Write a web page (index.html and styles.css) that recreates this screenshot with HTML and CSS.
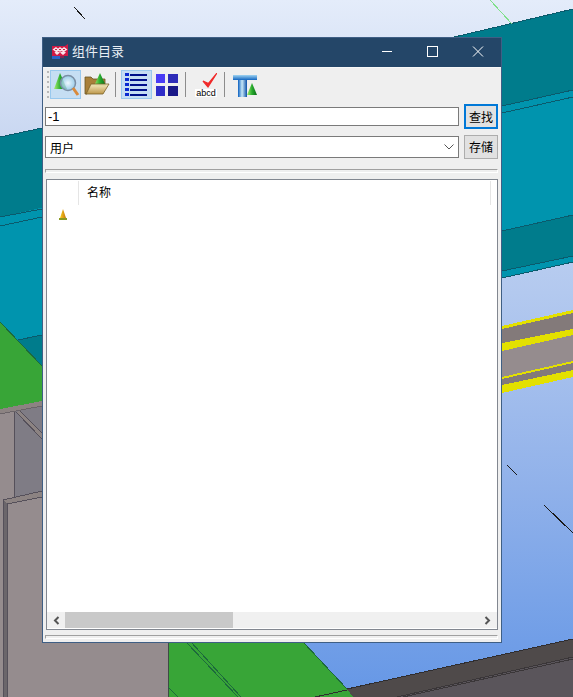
FILE: index.html
```html
<!DOCTYPE html>
<html lang="zh">
<head>
<meta charset="utf-8">
<title>组件目录</title>
<link rel="stylesheet" href="styles.css">
</head>
<body>
<svg class="scene" width="573" height="697" viewBox="0 0 573 697" shape-rendering="crispEdges">
  <defs>
    <linearGradient id="sky" x1="0" y1="0" x2="0" y2="1">
      <stop offset="0" stop-color="#e4ecfa"/>
      <stop offset="0.2" stop-color="#c9d7f1"/>
      <stop offset="0.42" stop-color="#b3c9ef"/>
      <stop offset="0.7" stop-color="#90b1ea"/>
      <stop offset="1" stop-color="#6597e6"/>
    </linearGradient>
  </defs>
  <rect width="573" height="697" fill="url(#sky)"/>
  <polygon points="0,137 42,128 500,128 500,37 450,38 573,9 573,256 0,380" fill="#007c8c"/>
  <polygon points="0,217 573,90 573,262 502,278 0,380" fill="#0094ae"/>
  <polygon points="0,137 42,128 500,128 450,38 573,9 573,90 0,217" fill="#007c8c"/>
  <polygon points="502,231 573,215 573,256 502,271" fill="#007c8c"/>
  <polyline points="450,38 573,9" fill="none" stroke="#0b5a6c"/>
  <polyline points="0,137 42,128" fill="none" stroke="#0b5a6c"/>
  <polyline points="0,217 42,209" fill="none" stroke="#0b5a6c"/>
  <polyline points="0,226 42,217" fill="none" stroke="#0b5a6c"/>
  <polyline points="502,106 573,90" fill="none" stroke="#0b5a6c"/>
  <polyline points="502,113 573,97" fill="none" stroke="#0b5a6c"/>
  <polyline points="502,231 573,215" fill="none" stroke="#0b5a6c"/>
  <polyline points="502,271 573,256" fill="none" stroke="#0b5a6c"/>
  <polyline points="502,278 573,262" fill="none" stroke="#0b5a6c"/>
  <rect x="0" y="260" width="42" height="70" fill="#0094ae"/>
  <polyline points="490,0 512,24" fill="none" stroke="#7fe08a"/>
  <polyline points="74,7 85,19" fill="none" stroke="#1a1a1a"/>
  <polyline points="507,465 517,475" fill="none" stroke="#1a1a1a"/>
  <polyline points="544,505 573,533" fill="none" stroke="#1a1a1a"/>

  <polygon points="502,326 573,310 573,377 502,393" fill="#e3e000"/>
  <polygon points="502,329 573,313 573,329 502,343" fill="#837a7a"/>
  <polygon points="502,351 573,335 573,361 502,377" fill="#958c8e"/>
  <polygon points="502,379 573,363 573,370 502,385" fill="#837a7a"/>

  <polygon points="0,322 42,366 42,401 0,409" fill="#38a537"/>
  <polygon points="18,340 42,335 42,366" fill="#007c8c"/>
  <polyline points="0,322 42,366" fill="none" stroke="#1d6a3c"/>
  <polyline points="18,340 42,335" fill="none" stroke="#0b5a6c"/>
  <polygon points="0,409 42,401 42,697 0,697" fill="#958c8e"/>
  <polygon points="0,414 42,406 42,401 0,409" fill="#8c8382"/>
  <polygon points="14,412 42,406 42,491 14,497" fill="#7f7c85"/>
  <polygon points="16,412 20,411 42,433 42,439" fill="#8c8382"/>
  <polyline points="16,412 42,439" fill="none" stroke="#55505a"/>
  <polyline points="20,411 42,433" fill="none" stroke="#55505a"/>
  <polyline points="14,412 14,497" fill="none" stroke="#55505a"/>
  <polyline points="0,414 42,406" fill="none" stroke="#6a6468"/>
  <polygon points="3,500 42,491 42,497 7,504" fill="#8c8382"/>
  <polygon points="3,500 7,504 7,697 3,697" fill="#6b666b"/>
  <polyline points="3,500 42,491" fill="none" stroke="#55505a"/>
  <polyline points="7,504 42,497" fill="none" stroke="#55505a"/>
  <polyline points="3,500 3,697" fill="none" stroke="#55505a"/>
  <polyline points="7,504 7,697" fill="none" stroke="#55505a"/>

  <rect x="42" y="640" width="126" height="57" fill="#958c8e"/>
  <polygon points="168,640 302,640 355,697 168,697" fill="#38a537"/>
  <polyline points="168,640 168,697" fill="none" stroke="#3f4a46"/>
  <polyline points="303,642 347,689" fill="none" stroke="#1d6a3c"/>
  <polyline points="186,642 238,697" fill="none" stroke="#1d6a3c"/>
  <polyline points="191,642 241,697" fill="none" stroke="#1d6a3c"/>
  <polyline points="168,687 178,697" fill="none" stroke="#1d6a3c"/>
  <polygon points="347,689 573,639 573,697 353,697" fill="#4f4a4a"/>
  <polygon points="397,697 573,657 573,697" fill="#5a555b"/>
  <polyline points="347,689 573,639" fill="none" stroke="#2f2d2f"/>
  <polyline points="315,697 347,690" fill="none" stroke="#2f2d2f"/>
  <polyline points="397,697 573,657" fill="none" stroke="#3a3638"/>
  <polyline points="403,697 573,659" fill="none" stroke="#3a3638"/>
</svg>

<main class="window">
  <header class="titlebar">
    <svg class="app-icon" width="18" height="16" viewBox="0 0 18 16">
      <path d="M1 3h13l3-2v12H1z" fill="#d01a45"/>
      <rect x="1" y="13" width="8" height="3" fill="#2c63c8"/>
      <rect x="9" y="13" width="4" height="2" fill="#7d2a55"/>
      <path d="M1.500 6.500 5 4l3 2.500L5 9zM6 6.500 9 4l3 2.500L9 9zM10 6.500 13 4l3.500 2.500L13 9zM3.500 9.500 6 8l3 1.500L6 12zM9 9.500 12 8l3 1.500L12 12z" fill="#f9e3e8"/>
      <path d="M4 6.500h2M8 6.500h2M12 6.500h2" stroke="#d01a45" stroke-width="1"/>
    </svg>
    <span class="title-text">组件目录</span>
    <div class="controls">
      <svg class="ctl" width="46" height="29" viewBox="0 0 46 29"><path d="M19 13.500h10" stroke="#fff" fill="none"/></svg>
      <svg class="ctl" width="46" height="29" viewBox="0 0 46 29"><rect x="18.500" y="8.500" width="10" height="10" stroke="#fff" fill="none"/></svg>
      <svg class="ctl" width="46" height="29" viewBox="0 0 46 29"><path d="M18 8.500l10 10M28 8.500l-10 10" stroke="#fff" fill="none"/></svg>
    </div>
  </header>

  <div class="toolbar">
    <div class="grip"><i></i><i></i><i></i><i></i><i></i><i></i></div>
    <button class="tool tool-on">
      <svg width="29" height="27" viewBox="0 0 29 27">
        <defs>
          <linearGradient id="cone" x1="0" x2="1"><stop offset="0" stop-color="#a5ee70"/><stop offset=".5" stop-color="#28ab2e"/><stop offset="1" stop-color="#0a6a18"/></linearGradient>
          <radialGradient id="lens"><stop offset="0" stop-color="#f2fbff" stop-opacity=".9"/><stop offset="1" stop-color="#8fc8e6" stop-opacity=".75"/></radialGradient>
        </defs>
        <path d="M9 2 3 18h13z" fill="url(#cone)"/>
        <circle cx="17" cy="12" r="7.500" fill="url(#lens)" stroke="#7b8fa5" stroke-width="1.500"/>
        <path d="M22 17l5 7" stroke="#d98a3c" stroke-width="3"/>
      </svg>
    </button>
    <button class="tool">
      <svg width="26" height="25" viewBox="0 0 26 25">
        <defs><linearGradient id="fold" x1="0" y1="0" x2="0" y2="1"><stop offset="0" stop-color="#f7ecc0"/><stop offset="1" stop-color="#b98f3a"/></linearGradient></defs>
        <path d="M1 5h6l2 2h12v6H7l-4 9H1z" fill="#a9803a" stroke="#6b5524" stroke-width=".8"/>
        <path d="M16 1l-6 13h12z" fill="url(#cone)"/>
        <path d="M7 12h18l-6 10H2z" fill="url(#fold)" fill-opacity=".92" stroke="#7a6228" stroke-width=".8"/>
      </svg>
    </button>
    <span class="sep"></span>
    <button class="tool tool-on">
      <svg width="23" height="25" viewBox="0 0 23 25" shape-rendering="crispEdges">
        <g fill="#0a2bd0"><rect x="0" y="1" width="4" height="3"/><rect x="0" y="6" width="4" height="3"/><rect x="0" y="11" width="4" height="3"/><rect x="0" y="16" width="4" height="3"/><rect x="0" y="21" width="4" height="3"/></g>
        <g fill="#00118a"><rect x="5" y="2" width="17" height="2"/><rect x="5" y="7" width="17" height="2"/><rect x="5" y="12" width="17" height="2"/><rect x="5" y="17" width="17" height="2"/><rect x="5" y="22" width="17" height="2"/></g>
      </svg>
    </button>
    <button class="tool tool-grid">
      <svg width="22" height="22" viewBox="0 0 22 22" shape-rendering="crispEdges">
        <rect x="0" y="0" width="9" height="9" fill="#4a3cf5"/>
        <rect x="12" y="0" width="10" height="9" fill="#2e2cb8"/>
        <rect x="0" y="12" width="9" height="10" fill="#2f2cc8"/>
        <rect x="12" y="12" width="10" height="10" fill="#1a1888"/>
      </svg>
    </button>
    <span class="sep sep-a"></span>
    <button class="tool tool-abcd">
      <svg width="22" height="24" viewBox="0 0 22 24">
        <path d="M8 8l5 6 9-14-8.500 10.500z" fill="#f02a2a" stroke="#f02a2a" stroke-width="1.200"/>
        <rect x="0" y="16" width="22" height="8" fill="#fff"/>
        <text x="11" y="23" class="abcd">abcd</text>
      </svg>
    </button>
    <span class="sep sep-b"></span>
    <button class="tool tool-t">
      <svg width="25" height="26" viewBox="0 0 25 26">
        <defs>
          <linearGradient id="steel" x1="0" x2="1"><stop offset="0" stop-color="#0a5fc0"/><stop offset=".45" stop-color="#c8e8f7"/><stop offset="1" stop-color="#0a4fa8"/></linearGradient>
          <linearGradient id="flange" x1="0" y1="0" x2="0" y2="1"><stop offset="0" stop-color="#9fd4f2"/><stop offset="1" stop-color="#1265c0"/></linearGradient>
        </defs>
        <rect x="0" y="3" width="24" height="5" fill="url(#flange)"/>
        <rect x="5" y="8" width="9" height="17" fill="url(#steel)"/>
        <path d="M19 11l-5 12h10z" fill="url(#cone)"/>
      </svg>
    </button>
  </div>

  <div class="form-row">
    <div class="field">-1</div>
    <button class="btn btn-default">查找</button>
  </div>
  <div class="form-row form-row-2">
    <div class="field field-combo">
      <span>用户</span>
      <svg width="10" height="6" viewBox="0 0 10 6"><path d="M.5.500 5 5 9.500.500" fill="none" stroke="#555"/></svg>
    </div>
    <button class="btn">存储</button>
  </div>

  <div class="group-line"></div>

  <section class="list">
    <div class="list-head">
      <div class="col-a"></div>
      <div class="col-b">名称</div>
    </div>
    <div class="list-body">
      <svg class="row-icon" width="10" height="11" viewBox="0 0 10 11">
        <defs><linearGradient id="mini" x1="0" x2="1"><stop offset="0" stop-color="#f8d020"/><stop offset="1" stop-color="#c9760c"/></linearGradient></defs>
        <path d="M5 0 2 9h6z" fill="url(#mini)"/>
        <rect x="1" y="9" width="8" height="2" fill="#8a9a20"/>
      </svg>
    </div>
    <div class="hscroll">
      <svg class="arrow" width="7" height="9" viewBox="0 0 7 9"><path d="M5.500 1 2 4.500 5.500 8" fill="none" stroke="#555" stroke-width="2"/></svg>
      <div class="thumb"></div>
      <svg class="arrow arrow-r" width="7" height="9" viewBox="0 0 7 9"><path d="M1.500 1 5 4.500 1.500 8" fill="none" stroke="#555" stroke-width="2"/></svg>
    </div>
  </section>

  <div class="group-line group-line-bottom"></div>
</main>
</body>
</html>
```
FILE: styles.css
```css
* {
  box-sizing: border-box;
}

html,
body {
  margin: 0;
  padding: 0;
  width: 573px;
  height: 697px;
  overflow: hidden;
  background: #b3c9ef;
}

body {
  position: relative;
  font-family: "Noto Sans CJK SC", "Liberation Sans", sans-serif;
  font-size: 12px;
  color: #000;
}

.scene {
  position: absolute;
  left: 0;
  top: 0;
  display: block;
}

.window {
  position: absolute;
  left: 42px;
  top: 37px;
  width: 460px;
  height: 606px;
  border: 1px solid #3f5f85;
  background: #efefef;
  display: flex;
  flex-direction: column;
}

.titlebar {
  height: 30px;
  flex: none;
  background: #244668;
  border-bottom: 1px solid #f7f7f7;
  display: flex;
  align-items: center;
  padding: 0 0 3px 8px;
  color: #e8eef4;
}

.app-icon {
  flex: none;
}

.title-text {
  margin-left: 3px;
  font-size: 13px;
  line-height: 18px;
}

.controls {
  margin-left: auto;
  display: flex;
  align-self: flex-start;
}

.ctl {
  display: block;
}

.toolbar {
  height: 36px;
  flex: none;
  display: flex;
  align-items: center;
  padding-left: 4px;
  padding-bottom: 3px;
}

.grip {
  width: 2px;
  display: flex;
  flex-direction: column;
  gap: 3px;
  margin-right: 1px;
}

.grip i {
  display: block;
  width: 2px;
  height: 2px;
  background: #b8b8b8;
}

.tool {
  appearance: none;
  padding: 0;
  margin: 0;
  border: 1px solid transparent;
  background: none;
  width: 31px;
  height: 29px;
  display: flex;
  align-items: center;
  justify-content: center;
}

.tool-on {
  background: #c5def3;
  border-color: #99c9ee;
}

.tool-grid {
  width: 26px;
  margin-left: 2px;
}

.tool-abcd {
  width: 22px;
  margin-left: 9px;
  border: 0;
}

.tool-t {
  width: 25px;
  margin-left: 8px;
  border: 0;
}

.sep {
  width: 1px;
  height: 25px;
  background: #8c8c8c;
  margin: 0 5px 0 3px;
}

.sep-a {
  margin: 0 0 0 5px;
}

.sep-b {
  margin: 0 0 0 7px;
}

.abcd {
  font-family: "Liberation Sans", sans-serif;
  font-size: 9px;
  text-anchor: middle;
  fill: #000;
}

.form-row {
  height: 25px;
  flex: none;
  display: flex;
  align-items: center;
  gap: 5px;
  padding-left: 2px;
}

.form-row-2 {
  height: 24px;
  margin-top: 6px;
}

.field {
  width: 414px;
  height: 19px;
  border: 1px solid #7a7a7a;
  background: #fff;
  padding-left: 2px;
  font-family: "Liberation Sans", "Noto Sans CJK SC", sans-serif;
  font-size: 13px;
  line-height: 17px;
}

.field-combo {
  height: 22px;
  display: flex;
  align-items: center;
  justify-content: space-between;
  padding: 0 4px 0 4px;
  font-family: "Noto Sans CJK SC", sans-serif;
  font-size: 12px;
}

.btn {
  appearance: none;
  margin: 0;
  padding: 0;
  width: 34px;
  height: 24px;
  border: 1px solid #adadad;
  background: #e1e1e1;
  font-family: "Noto Sans CJK SC", sans-serif;
  font-size: 12px;
  line-height: 1;
  color: #000;
}

.btn-default {
  height: 25px;
  border: 2px solid #0078d7;
}

.group-line {
  height: 4px;
  flex: none;
  margin: 10px 3px 0 2px;
  border-top: 1px solid #a0a0a0;
  border-left: 1px solid #a0a0a0;
  border-right: 1px solid #fff;
  border-bottom: 1px solid #fff;
}

.list {
  flex: none;
  width: 452px;
  height: 451px;
  margin: 6px 0 0 3px;
  border: 1px solid #828790;
  background: #fff;
  display: flex;
  flex-direction: column;
}

.list-head {
  height: 25px;
  flex: none;
  display: flex;
  margin-top: 1px;
}

.col-a {
  width: 32px;
  height: 24px;
  border-right: 1px solid #e5e5e5;
}

.col-b {
  width: 412px;
  height: 24px;
  padding-left: 8px;
  border-right: 1px solid #e5e5e5;
  line-height: 22px;
}

.list-body {
  flex: 1;
  padding: 3px 0 0 11px;
}

.row-icon {
  display: block;
}

.hscroll {
  height: 16px;
  flex: none;
  margin-bottom: 1px;
  background: #f0f0f0;
  display: flex;
  align-items: center;
}

.arrow {
  flex: none;
  margin-left: 6px;
}

.thumb {
  width: 168px;
  height: 16px;
  margin-left: 5px;
  background: #c9c9c9;
}

.arrow-r {
  margin-left: auto;
  margin-right: 6px;
}

.group-line-bottom {
  margin-top: 5px;
}
```
